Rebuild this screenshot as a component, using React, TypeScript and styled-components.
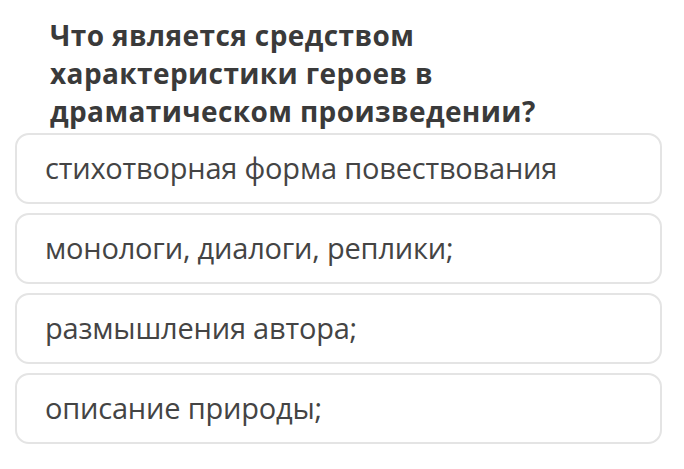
import React from 'react';
import styled, { createGlobalStyle } from 'styled-components';

const GlobalStyle = createGlobalStyle`
  html, body {
    margin: 0;
    padding: 0;
    background: #ffffff;
  }
`;

const Page = styled.div`
  width: 684px;
  height: 469px;
  box-sizing: border-box;
  padding: 16px 22px 0 15px;
  font-family: "Open Sans", "Noto Sans", sans-serif;
  overflow: hidden;
`;

const Question = styled.h2`
  margin: 0 0 0 35px;
  font-size: 28px;
  font-weight: 700;
  line-height: 38px;
  color: #3a3a3a;
  width: 580px;
  letter-spacing: 0.4px;
`;

const Options = styled.div`
  display: flex;
  flex-direction: column;
  gap: 9px;
  margin-top: 3px;
`;

const Option = styled.div`
  height: 71px;
  box-sizing: border-box;
  border: 2px solid #e4e4e4;
  border-radius: 14px;
  display: flex;
  align-items: center;
  padding: 0 0 3px 28px;
  font-size: 29px;
  color: #444444;
  letter-spacing: -0.2px;
`;

const options = [
  'стихотворная форма повествования',
  'монологи, диалоги, реплики;',
  'размышления автора;',
  'описание природы;',
];

export default function App() {
  return (
    <Page>
      <GlobalStyle />
      <Question>Что является средством характеристики героев в драматическом произведении?</Question>
      <Options>
        {options.map((text) => (
          <Option key={text}>{text}</Option>
        ))}
      </Options>
    </Page>
  );
}
